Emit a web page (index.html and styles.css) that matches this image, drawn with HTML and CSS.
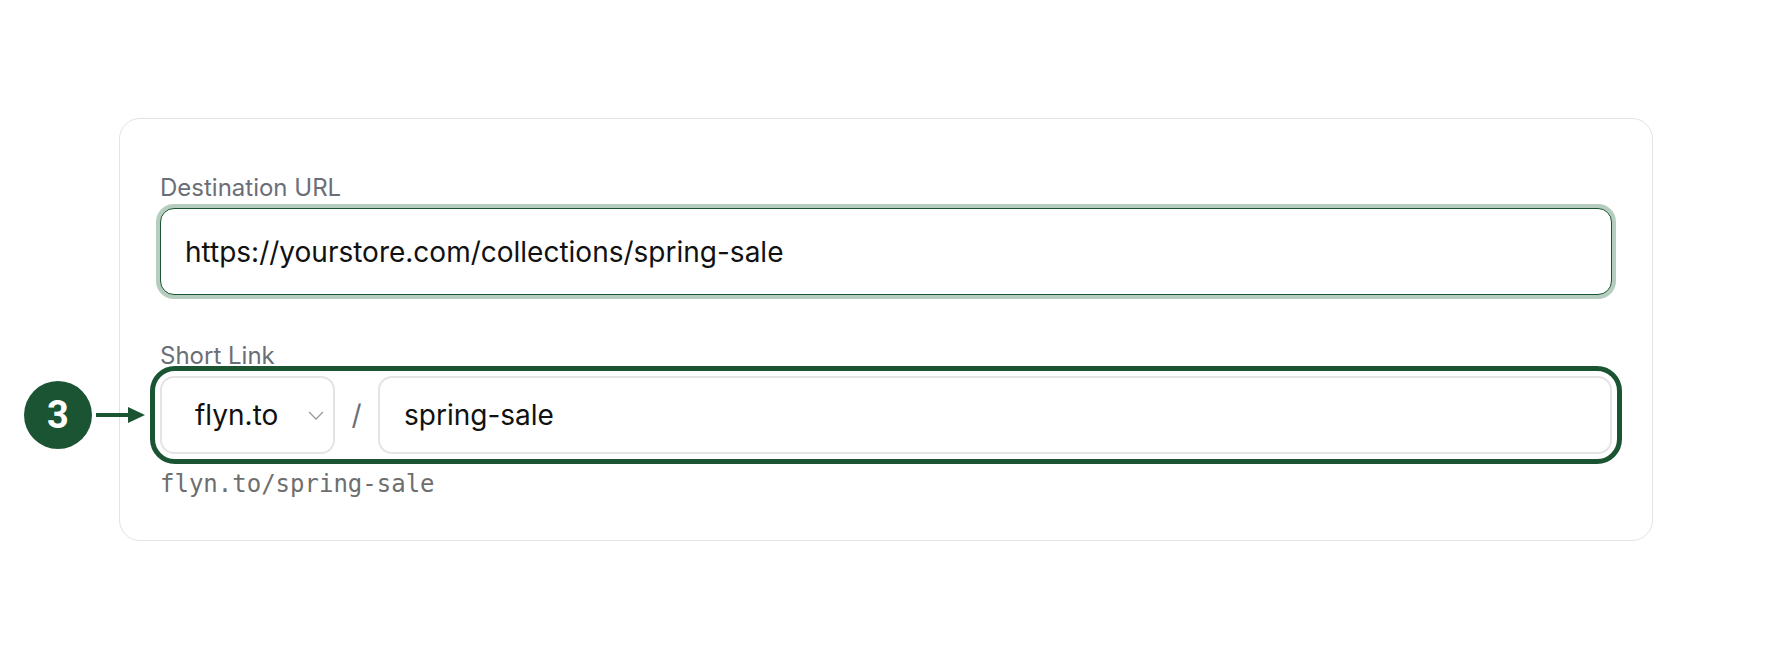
FILE: index.html
```html
<!DOCTYPE html>
<html lang="en">
<head>
  <meta charset="UTF-8">
  <title>Create Link</title>
  <link rel="stylesheet" href="styles.css">
</head>
<body>
  <div class="page">
    <div class="card">
      <div class="field">
        <label class="field-label" for="destUrl">Destination URL</label>
        <input id="destUrl" class="text-input is-focused" type="text" value="https://yourstore.com/collections/spring-sale">
      </div>

      <div class="field">
        <label class="field-label" for="slug">Short Link</label>
        <div class="link-row">
          <div class="step-marker">
            <span class="step-badge">3</span>
            <svg class="step-arrow" width="49" height="16" viewBox="0 0 49 16">
              <line x1="0" y1="8" x2="34" y2="8" stroke="#1a5433" stroke-width="4"/>
              <polygon points="32,0 49,8 32,16" fill="#1a5433"/>
            </svg>
          </div>
          <div class="domain-select">
            <span>flyn.to</span>
            <svg class="chevron" width="16" height="9" viewBox="0 0 16 9">
              <polyline points="1,1 8,8 15,1" fill="none" stroke="#9a9aa2" stroke-width="1.3"/>
            </svg>
          </div>
          <span class="slash">/</span>
          <input id="slug" class="text-input slug-input" type="text" value="spring-sale">
        </div>
        <div class="link-preview">flyn.to/spring-sale</div>
      </div>
    </div>
  </div>
</body>
</html>
```

FILE: styles.css
```css
* {
  box-sizing: border-box;
}
body {
  margin: 0;
  background: #fff;
  font-family: Inter, "Noto Sans", sans-serif;
  color: #111;
}
.page {
  padding: 118px 119px 0;
}
.card {
  background: #fff;
  border: 1px solid #e3e3e3;
  border-radius: 21px;
  padding: 55px 40px 42px;
}
.field + .field {
  margin-top: 47px;
}
.field-label {
  display: block;
  font-size: 24px;
  line-height: 28px;
  color: #6b6e76;
  margin-bottom: 6px;
}
.text-input {
  display: block;
  width: 100%;
  height: 87px;
  padding: 0 24px;
  border: 1.5px solid #1a5433;
  border-radius: 14px;
  font-family: inherit;
  font-size: 28px;
  color: #111;
  background: #fff;
  outline: none;
}
.is-focused {
  box-shadow: 0 0 0 4px #b5cdbf;
}
.link-row {
  position: relative;
  display: flex;
  height: 78px;
  border-radius: 15px;
  outline: 5px solid #1a5433;
  outline-offset: 5px;
}
.step-marker {
  position: absolute;
  right: calc(100% + 15px);
  top: 50%;
  transform: translateY(-50%);
  display: flex;
  align-items: center;
  gap: 4px;
}
.step-badge {
  width: 68px;
  height: 68px;
  border-radius: 50%;
  background: #1a5433;
  color: #fff;
  font-family: Roboto, "Liberation Sans", sans-serif;
  font-weight: 700;
  font-size: 38px;
  display: flex;
  align-items: center;
  justify-content: center;
}
.domain-select {
  flex: 0 0 175px;
  display: flex;
  align-items: center;
  padding: 0 9px 0 33px;
  border: 2px solid #e4e4e4;
  border-radius: 14px;
  font-size: 28px;
}
.chevron {
  margin-left: auto;
}
.slash {
  flex: 0 0 43px;
  display: flex;
  align-items: center;
  justify-content: center;
  font-size: 28px;
  color: #6b6e76;
}
.slug-input {
  flex: 1;
  height: auto;
  border: 2px solid #e4e4e4;
}
.link-preview {
  margin-top: 16px;
  font-family: "DejaVu Sans Mono", monospace;
  font-size: 24px;
  line-height: 28px;
  color: #6e6e6e;
}
```
